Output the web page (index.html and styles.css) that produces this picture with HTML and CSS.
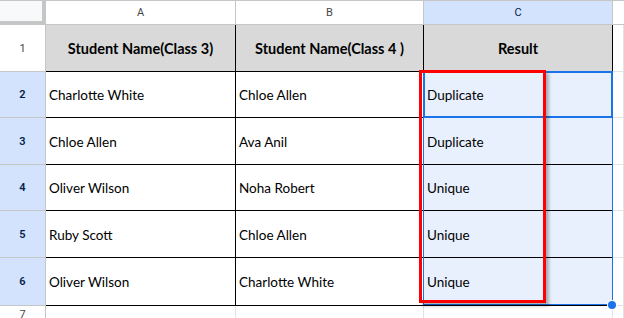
FILE: index.html
```html
<!DOCTYPE html>
<html>
<head>
<meta charset="utf-8">
<link rel="stylesheet" href="styles.css">
</head>
<body>
<div class="sheet">
  <div class="grid">
    <div class="corner"></div>
    <div class="colh">A</div>
    <div class="colh">B</div>
    <div class="colh colsel">C</div>
    <div class="colh colrest"></div>

    <div class="rowh">1</div>
    <div class="cell th">Student Name(Class 3)</div>
    <div class="cell th">Student Name(Class 4 )</div>
    <div class="cell th">Result</div>
    <div class="cell empty"></div>

    <div class="rowh rsel">2</div>
    <div class="cell">Charlotte White</div>
    <div class="cell">Chloe Allen</div>
    <div class="cell sel">Duplicate</div>
    <div class="cell empty"></div>

    <div class="rowh rsel">3</div>
    <div class="cell">Chloe Allen</div>
    <div class="cell">Ava Anil</div>
    <div class="cell sel">Duplicate</div>
    <div class="cell empty"></div>

    <div class="rowh rsel">4</div>
    <div class="cell">Oliver Wilson</div>
    <div class="cell">Noha Robert</div>
    <div class="cell sel">Unique</div>
    <div class="cell empty"></div>

    <div class="rowh rsel">5</div>
    <div class="cell">Ruby Scott</div>
    <div class="cell">Chloe Allen</div>
    <div class="cell sel">Unique</div>
    <div class="cell empty"></div>

    <div class="rowh rsel">6</div>
    <div class="cell">Oliver Wilson</div>
    <div class="cell">Charlotte White</div>
    <div class="cell sel">Unique</div>
    <div class="cell empty"></div>

    <div class="rowh last">7</div>
    <div class="cell empty"></div>
    <div class="cell empty"></div>
    <div class="cell empty"></div>
    <div class="cell empty"></div>
  </div>
  <div class="range"></div>
  <div class="active"></div>
  <div class="handle"></div>
  <div class="redbox"></div>
</div>
</body>
</html>
```

FILE: styles.css
```css
html, body {
  margin: 0;
  padding: 0;
  background: #fff;
  overflow: hidden;
}
.sheet {
  position: relative;
  width: 624px;
  height: 318px;
  overflow: hidden;
}
.grid {
  display: grid;
  grid-template-columns: 46px 190px 188px 189px 1fr;
  grid-template-rows: 25px 47px 46px 47px 46px 47px 48px 1fr;
  height: 318px;
}
.grid > div {
  box-sizing: border-box;
}
.corner {
  background: #f8f9fa;
  border-right: 4px solid #c4c7c5;
  border-bottom: 4px solid #c4c7c5;
  border-top: 1px solid #c4c7c5;
}
.colh {
  display: flex;
  align-items: center;
  justify-content: center;
  font-family: Roboto, "Liberation Sans", sans-serif;
  font-size: 11px;
  color: #444746;
  background: #fff;
  border-right: 1px solid #c4c7c5;
  border-bottom: 1px solid #c4c7c5;
  border-top: 1px solid #c4c7c5;
}
.colsel {
  background: #d3e3fd;
  color: #041e49;
}
.colrest {
  border-right: none;
}
.rowh {
  display: flex;
  align-items: center;
  justify-content: center;
  font-family: Roboto, "Liberation Sans", sans-serif;
  font-size: 11px;
  color: #444746;
  background: #fff;
  border-right: 1px solid #c4c7c5;
  border-bottom: 1px solid #c4c7c5;
}
.rsel {
  background: #d3e3fd;
  color: #041e49;
  font-weight: 600;
}
.last {
  align-items: flex-start;
  padding-top: 2px;
  border-bottom: none;
}
.cell {
  display: flex;
  align-items: center;
  padding-left: 3px;
  padding-top: 1px;
  font-family: Lato, "Liberation Sans", sans-serif;
  font-size: 13.5px;
  color: #000;
  background: #fff;
  border-right: 1px solid #000;
  border-bottom: 1px solid #000;
  white-space: nowrap;
}
.th {
  justify-content: center;
  padding-left: 0;
  background: #d9d9d9;
  font-weight: bold;
  font-size: 14.5px;
}
.sel {
  background: #e8f0fe;
}
.empty {
  border-right: 1px solid #e2e3e3;
  border-bottom: 1px solid #e2e3e3;
}
.range {
  position: absolute;
  left: 423px;
  top: 71px;
  width: 190px;
  height: 234px;
  border: 1px solid #1a73e8;
  box-sizing: border-box;
}
.active {
  position: absolute;
  left: 423px;
  top: 71px;
  width: 190px;
  height: 47px;
  border: 2px solid #1a73e8;
  box-sizing: border-box;
}
.handle {
  position: absolute;
  left: 608px;
  top: 301px;
  width: 8px;
  height: 8px;
  border-radius: 50%;
  background: #1a73e8;
  box-shadow: 0 0 0 1px #fff;
}
.redbox {
  position: absolute;
  left: 419px;
  top: 70px;
  width: 127px;
  height: 233px;
  border: 3px solid #ff0000;
  box-sizing: border-box;
  box-shadow: 3px 3px 3px rgba(0, 0, 0, 0.28);
}
```
